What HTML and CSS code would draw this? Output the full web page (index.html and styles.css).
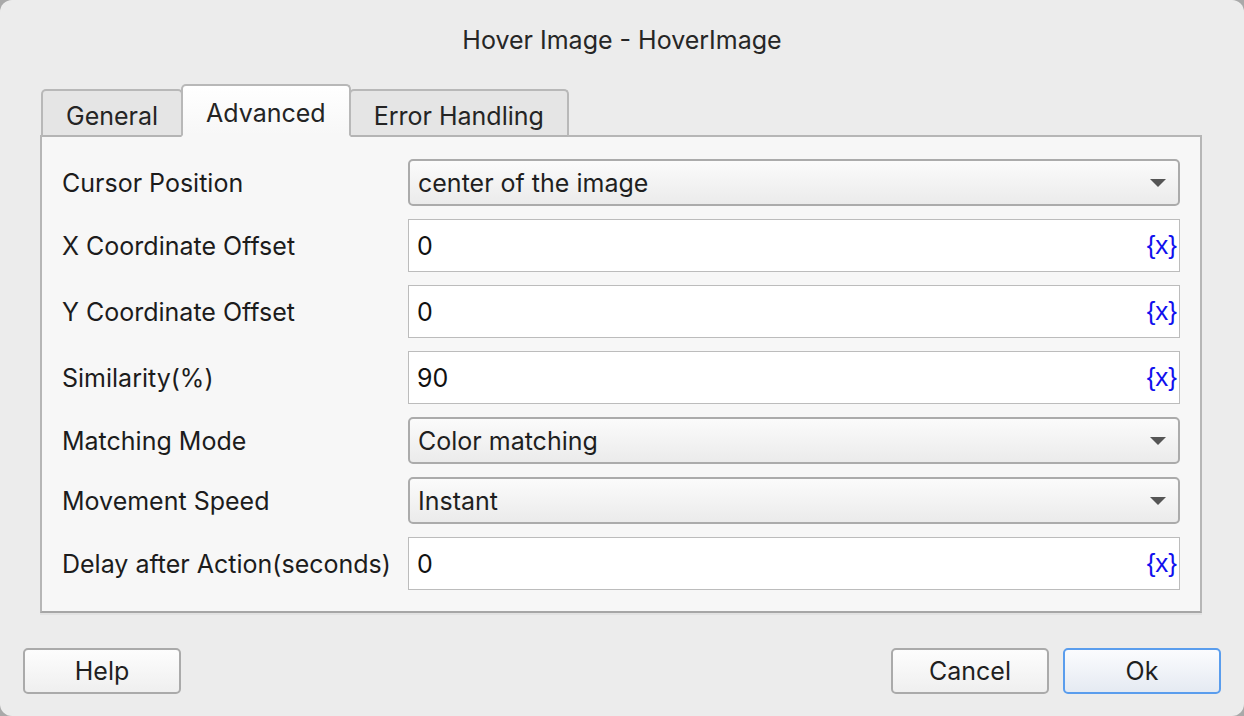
FILE: index.html
```html
<!DOCTYPE html>
<html lang="en">
<head>
<meta charset="utf-8">
<title>Hover Image - HoverImage</title>
<link rel="stylesheet" href="styles.css">
</head>
<body>
<div class="window">
  <div class="title">Hover Image - HoverImage</div>
  <div class="tabs">
    <div class="tab">General</div>
    <div class="tab active">Advanced</div>
    <div class="tab">Error Handling</div>
  </div>
  <div class="panel">
    <div class="form">
      <div class="label">Cursor Position</div>
      <div class="combo"><span>center of the image</span><span class="arrow"></span></div>

      <div class="label">X Coordinate Offset</div>
      <div class="input"><span>0</span><span class="var">{x}</span></div>

      <div class="label">Y Coordinate Offset</div>
      <div class="input"><span>0</span><span class="var">{x}</span></div>

      <div class="label">Similarity(%)</div>
      <div class="input"><span>90</span><span class="var">{x}</span></div>

      <div class="label">Matching Mode</div>
      <div class="combo"><span>Color matching</span><span class="arrow"></span></div>

      <div class="label">Movement Speed</div>
      <div class="combo"><span>Instant</span><span class="arrow"></span></div>

      <div class="label">Delay after Action(seconds)</div>
      <div class="input"><span>0</span><span class="var">{x}</span></div>
    </div>
  </div>
  <div class="footer">
    <button class="btn">Help</button>
    <div class="spacer"></div>
    <button class="btn">Cancel</button>
    <button class="btn default">Ok</button>
  </div>
</div>
</body>
</html>
```
FILE: styles.css
```css
html, body {
  margin: 0;
  padding: 0;
  background: #a9a9a9;
}
body {
  width: 1244px;
  height: 716px;
  overflow: hidden;
  font-family: "Inter", "Liberation Sans", sans-serif;
  font-size: 25px;
  color: #1d1d1d;
}
.window {
  box-sizing: border-box;
  width: 1244px;
  height: 716px;
  background: #ececec;
  border-radius: 12px;
  display: flex;
  flex-direction: column;
}
.title {
  height: 80px;
  margin-bottom: 4px;
  display: flex;
  align-items: center;
  justify-content: center;
  color: #262626;
}
.tabs {
  display: flex;
  align-items: flex-end;
  padding-left: 41px;
  height: 53px;
  position: relative;
  z-index: 1;
  margin-bottom: -2px;
}
.tab {
  box-sizing: border-box;
  height: 48px;
  padding: 6px 23px 0 23px;
  display: flex;
  align-items: center;
  background: #e5e5e5;
  border: 2px solid #b8b8b8;
  border-bottom: 2px solid #b4b4b4;
  border-radius: 5px 5px 0 0;
  color: #242424;
}
.tab + .tab {
  margin-left: -2px;
}
.tab.active {
  height: 53px;
  padding-top: 4px;
  background: linear-gradient(#ffffff, #f7f7f7);
  border-bottom-color: #f7f7f7;
  position: relative;
  z-index: 2;
}
.panel {
  box-sizing: border-box;
  margin: 0 42px 0 40px;
  height: 478px;
  background: #f7f7f7;
  border: 2px solid #b6b6b6;
  border-bottom-color: #a6a6a6;
  box-shadow: 0 2px 0 #e2e2e2;
  padding: 22px 20px 0 20px;
}
.form {
  display: grid;
  grid-template-columns: 346px 1fr;
  row-gap: 13px;
  align-items: center;
}
.label {
  white-space: nowrap;
  color: #1c1c1c;
}
.combo {
  box-sizing: border-box;
  height: 47px;
  border: 2px solid #ababab;
  border-radius: 5px;
  background: linear-gradient(#fbfbfb, #ebebeb);
  display: flex;
  align-items: center;
  justify-content: space-between;
  padding: 0 12px 0 8px;
  color: #1f1f1f;
}
.arrow {
  width: 0;
  height: 0;
  border-left: 8px solid transparent;
  border-right: 8px solid transparent;
  border-top: 8px solid #555555;
}
.input {
  box-sizing: border-box;
  height: 53px;
  border: 1.5px solid #bcbcbc;
  background: #ffffff;
  display: flex;
  align-items: center;
  justify-content: space-between;
  padding: 0 2px 0 8px;
  color: #111111;
}
.var {
  color: #1010ee;
  font-family: "Liberation Sans", sans-serif;
  font-size: 26px;
}
.footer {
  display: flex;
  align-items: center;
  padding: 35px 23px 0 23px;
  gap: 14px;
}
.spacer {
  flex: 1;
}
.btn {
  box-sizing: border-box;
  width: 158px;
  height: 46px;
  border: 2px solid #aaaaaa;
  border-radius: 5px;
  background: linear-gradient(#fdfdfd, #efefef);
  font-family: inherit;
  font-size: 25px;
  color: #1f1f1f;
  padding: 0;
}
.btn.default {
  border-color: #5a9ded;
  background: linear-gradient(#fbfcfe, #e5eaf2);
}
```
